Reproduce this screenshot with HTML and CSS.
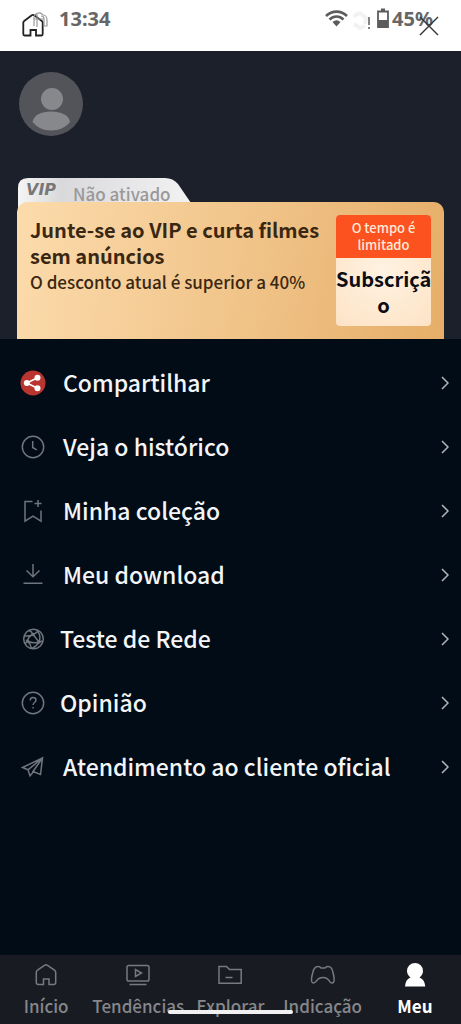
FILE: index.html
```html
<!DOCTYPE html>
<html lang="pt">
<head>
<meta charset="utf-8">
<meta name="viewport" content="width=device-width, initial-scale=1">
<title>Meu</title>
<link rel="stylesheet" href="styles.css">
</head>
<body>
<div class="app">
  <header class="status">
    <div class="status-left">
      <svg class="ghost" width="16" height="18" viewBox="0 0 16 18"><path d="M1 14V6a5 5 0 0 1 9-3c3 0 4 3 4 5v6h-3V7c0-2-1-3-3-3M4 1v14M1 7h10"/></svg>
      <button class="home" aria-label="Início"><svg width="22" height="24" viewBox="0 0 22 24"><path d="M4 22.500H2.500Q1.300 22.500 1.300 21V9.500Q1.300 8.500 2.200 7.900L9.800 2.300Q11 1.400 12.200 2.300L19.800 7.900Q20.700 8.500 20.700 9.500V21Q20.700 22.500 19.500 22.500H14V17H8.500V22.500Z"/></svg></button>
      <span class="clock">13:34</span>
    </div>
    <div class="status-right">
      <svg width="23" height="17" viewBox="0 0 23 17"><g fill="none" stroke="#5c5c5c" stroke-width="2.600"><path d="M1 6C7 .2 16 .2 22 6"/><path d="M4.500 9.500c4-4 10-4 14 0"/></g><path d="M7.500 12q4-3.500 8 0l-4 4.500z" fill="#5c5c5c"/></svg>
      <svg class="signal" width="22" height="22" viewBox="0 0 22 22"><path d="M3 7q3-5 8-3M9 3l6 5-1 6M3 14l6 4 5-2" fill="none" stroke="#f2f2f2" stroke-width="4"/><path d="M18 7v8M18 17v2" stroke="#777" stroke-width="1.800"/></svg>
      <svg class="battery" width="12" height="20" viewBox="0 0 12 20"><path d="M1 3.500h10V19H1zM4 1.500h4" fill="none" stroke="#5c5c5c" stroke-width="1.800"/><path d="M1 12h10v7H1z" fill="#5c5c5c"/></svg>
      <span class="clock">45%</span>
      <button class="close" aria-label="Fechar"><svg width="20" height="20" viewBox="0 0 20 20"><path d="M1 1l18 18M19 1L1 19"/></svg></button>
    </div>
  </header>

  <section class="profile">
    <svg class="avatar" width="64" height="64" viewBox="0 0 64 64"><circle cx="32" cy="32" r="32" fill="#53545a"/><circle cx="33" cy="27" r="11" fill="#87888c"/><path d="M13.500 50C15 43 22 39.500 32 39.500S50 43 51 50C47 55 40 58.500 32 58.500S18 55 13.500 50Z" fill="#87888c"/></svg>
    <div class="vip">
      <div class="vip-tab">
        <svg class="vip-shape" viewBox="0 0 173 40" preserveAspectRatio="none"><defs><linearGradient id="silver"><stop offset="0" stop-color="#f5f5f6"/><stop offset=".25" stop-color="#d9d9db"/><stop offset=".6" stop-color="#e5e5e7"/><stop offset="1" stop-color="#f2f2f3"/></linearGradient></defs><path d="M0 40V10Q0 0 10 0H147Q155 0 160 6L173 25V40Z" fill="url(#silver)"/></svg>
        <strong class="vip-mark">VIP</strong>
        <span class="vip-state">Não ativado</span>
      </div>
      <div class="card">
        <div class="card-text">
          <h1>Junte-se ao VIP e curta filmes sem anúncios</h1>
          <p>O desconto atual é superior a 40%</p>
        </div>
        <button class="subscribe">
          <span class="limit">O tempo é limitado</span>
          <span class="sub">Subscriçã<br>o</span>
        </button>
      </div>
    </div>
  </section>

  <nav class="menu" aria-label="Opções">
    <a href="#"><span class="ico"><svg viewBox="0 0 26 26"><circle cx="13" cy="13" r="12.500" fill="#b9352f" stroke="none"/><path d="M17.500 7.800L6.800 13l10.700 5.200" stroke="#fff" stroke-width="1.600"/><g fill="#fff" stroke="none"><circle cx="17.500" cy="7.800" r="3"/><circle cx="6.800" cy="13" r="3"/><circle cx="17.500" cy="18.200" r="3"/></g></svg></span><span class="label">Compartilhar</span><svg class="chev" viewBox="0 0 8 14"><path d="M1 1l6 6-6 6"/></svg></a>
    <a href="#"><span class="ico"><svg viewBox="0 0 26 26"><circle cx="13" cy="13" r="10.700"/><path d="M12.700 7v6.500l4 2.300"/></svg></span><span class="label">Veja o histórico</span><svg class="chev" viewBox="0 0 8 14"><path d="M1 1l6 6-6 6"/></svg></a>
    <a href="#"><span class="ico"><svg viewBox="0 0 26 26"><path d="M12.500 3.500H5V23.200l8-5 8 5V12.500M18 2v7M14.500 5.500h7"/></svg></span><span class="label">Minha coleção</span><svg class="chev" viewBox="0 0 8 14"><path d="M1 1l6 6-6 6"/></svg></a>
    <a href="#"><span class="ico"><svg viewBox="0 0 26 26"><path d="M13 2v12.500M6.500 8.500l6.500 6.200 6.500-6.200M3.500 21.200h19"/></svg></span><span class="label">Meu download</span><svg class="chev" viewBox="0 0 8 14"><path d="M1 1l6 6-6 6"/></svg></a>
    <a href="#" class="near"><span class="ico"><svg viewBox="0 0 26 26"><circle cx="13.500" cy="13" r="9.800"/><path d="M9 4.500q3 1 4 4l6 7.500M4.500 10q5 .5 8.500-1.500 4-1.500 5-4M7.500 15q1-5 5.500-6.500M7.500 15q6 3 11.500 1M7.500 15l-2.500 3M7.500 15q3 3 4 7.500M19 16q-2 4-7 6.500M19 16l3.500-1M17.500 5q4 5 1.500 11"/><g fill="#70747c" stroke="none"><circle cx="13" cy="8.500" r="1.800"/><circle cx="19" cy="16" r="1.800"/><circle cx="7.500" cy="15" r="1.800"/></g></svg></span><span class="label">Teste de Rede</span><svg class="chev" viewBox="0 0 8 14"><path d="M1 1l6 6-6 6"/></svg></a>
    <a href="#" class="near"><span class="ico"><svg viewBox="0 0 26 26"><circle cx="13" cy="13" r="10.700"/><path d="M10.200 10.500q0-3 2.900-3t2.900 2.600q0 1.400-1.500 2.400-1.400 1-1.400 2.500M13.100 17v1.600"/></svg></span><span class="label">Opinião</span><svg class="chev" viewBox="0 0 8 14"><path d="M1 1l6 6-6 6"/></svg></a>
    <a href="#"><span class="ico"><svg viewBox="0 0 26 26"><path d="M22.500 4L2.500 13.500l5.500 2.300L22.500 4 20.500 20.500l-7.500-3L22.500 4M8 15.800L10 21.800l3.500-4"/></svg></span><span class="label">Atendimento ao cliente oficial</span><svg class="chev" viewBox="0 0 8 14"><path d="M1 1l6 6-6 6"/></svg></a>
  </nav>

  <nav class="tabs" aria-label="Navegação">
    <a href="#"><svg viewBox="0 0 26 26"><path d="M10 22.500H5.500Q3.300 22.500 3.300 20.500V10.500Q3.300 9 4.500 8.200L11.500 3.300Q13 2.300 14.500 3.300L21.500 8.200Q22.700 9 22.700 10.500V20.500Q22.700 22.500 20.500 22.500H16V17H10.500V22.500Z"/></svg>Início</a>
    <a href="#"><svg viewBox="0 0 26 26"><rect x="2" y="3.500" width="22" height="15.500" rx="1.800"/><path d="M10.500 7.500v7l6-3.500zM4.500 22.500h17"/></svg>Tendências</a>
    <a href="#"><svg viewBox="0 0 26 26"><path d="M2 4.500h7.500l3 3H24.200V21.200H2ZM8.500 15.500h7"/></svg>Explorar</a>
    <a href="#"><svg viewBox="0 0 26 26"><path d="M8 4.500Q10 4.500 11 6h4q1-1.500 3-1.500 4 0 5 6 1.500 6 1 8.500-1 3.500-4 1-2.500-4.500-7-4.500T6 19.500q-3 3-4.300 0-.7-2.500 1-8.500Q4 4.500 8 4.500Z"/></svg>Indicação</a>
    <a href="#" class="on" aria-current="page"><svg viewBox="0 0 26 26"><path d="M13 1a8 8 0 0 1 8 8q0 3.500-3.500 6.500 5 1.500 5.800 9H3q.6-7.500 5.500-9Q5 12.500 5 9a8 8 0 0 1 8-8Z"/></svg>Meu</a>
    <span class="gesture"></span>
  </nav>
</div>
</body>
</html>
```
FILE: styles.css
```css
* { box-sizing: border-box; }
body {
  margin: 0;
  background: #010c17;
  font-family: "Noto Sans CJK SC", "Noto Sans", sans-serif;
}
button { border: 0; padding: 0; background: none; font: inherit; }
a { color: inherit; text-decoration: none; }
.app { display: flex; flex-direction: column; min-height: 100vh; }

.status {
  display: flex;
  justify-content: space-between;
  height: 51px;
  padding: 8px 28px 0 22px;
  background: #fff;
}
.status-left, .status-right { position: relative; display: flex; align-items: flex-start; }
.status-right { gap: 3px; }
.status-right svg { margin-top: 2px; }
.clock { color: #666; font: 700 20px/22px "Noto Sans", sans-serif; }
.status-left .clock { margin-left: 15px; }
.home { margin-top: 5px; }
.home svg { display: block; fill: none; stroke: #222; stroke-width: 1.8; }
.ghost { position: absolute; left: 11px; top: 4px; fill: none; stroke: #999; stroke-width: 1.2; }
.battery { margin-left: 1px; }
.status-right .battery { margin-top: 0; }
.close { position: absolute; right: -6px; top: 6px; }
.close svg { display: block; fill: none; stroke: #333; stroke-width: 1.4; }

.profile { padding: 21px 17px 0; background: #1c202b; }
.avatar { display: block; margin-left: 2px; }
.vip { margin-top: 42px; }
.vip-tab {
  position: relative;
  display: flex;
  width: 173px;
  height: 24px;
  margin-left: 1px;
  padding-left: 8px;
  gap: 17px;
}
.vip-shape { position: absolute; left: 0; top: 0; width: 173px; height: 40px; }
.vip-mark {
  position: relative;
  color: #777;
  font: italic 700 16px/24px "DejaVu Sans", sans-serif;
}
.vip-state { position: relative; color: #999; font-size: 17px; font-weight: 500; line-height: 32px; white-space: nowrap; }
.card {
  position: relative;
  display: flex;
  justify-content: space-between;
  align-items: flex-start;
  min-height: 137px;
  padding: 13px;
  border-radius: 10px 10px 0 0;
  background: linear-gradient(100deg, #fcdbac, #f0c388 55%, #e6ae68);
  color: #3a2712;
}
.card-text { flex: 1; min-width: 0; }
h1 { margin: 2px 0 0; font-size: 20px; line-height: 26px; font-weight: 700; }
p { margin: 0; font-size: 17px; line-height: 26px; font-weight: 500; }
.subscribe {
  flex: none;
  width: 95px;
  overflow: hidden;
  border-radius: 4px;
  background: radial-gradient(circle, #fff2e2, #fde3c5);
  color: #0d0d12;
}
.subscribe span { display: block; }
.limit { padding: 4px 12px 5px; background: #fc5220; color: #ffe9d8; font-size: 13px; line-height: 17px; font-weight: 500; }
.sub { padding: 8px 0; font-size: 20px; line-height: 26px; font-weight: 700; }

.menu { padding: 12px 12px 12px 20px; }
.menu a { display: flex; align-items: center; height: 64px; gap: 17px; color: #f3f5f7; }
.menu a.near { gap: 14px; }
.ico, .ico svg { display: block; width: 26px; height: 26px; }
.ico svg { fill: none; stroke: #70747c; stroke-width: 1.5; }
.label { flex: 1; padding-bottom: 2px; font-size: 23px; line-height: 32px; font-weight: 500; }
.chev { width: 8px; height: 14px; fill: none; stroke: #b4b8bd; stroke-width: 1.5; }

.tabs {
  position: relative;
  display: grid;
  grid-template-columns: repeat(5, 1fr);
  margin-top: auto;
  padding-top: 7px;
  height: 69px;
  background: #191b22;
  color: #85878b;
}
.tabs a { display: flex; flex-direction: column; align-items: center; gap: 5px; font-size: 17px; line-height: 26px; font-weight: 500; }
.tabs svg { width: 26px; height: 26px; fill: none; stroke: #777a80; stroke-width: 1.5; }
.tabs .on { color: #fff; font-weight: 700; }
.tabs .on svg { fill: #fff; stroke: none; }
.gesture { position: absolute; left: 50%; bottom: 10px; width: 125px; height: 4px; margin-left: -63px; border-radius: 2px; background: #f1f1f1; }
```
